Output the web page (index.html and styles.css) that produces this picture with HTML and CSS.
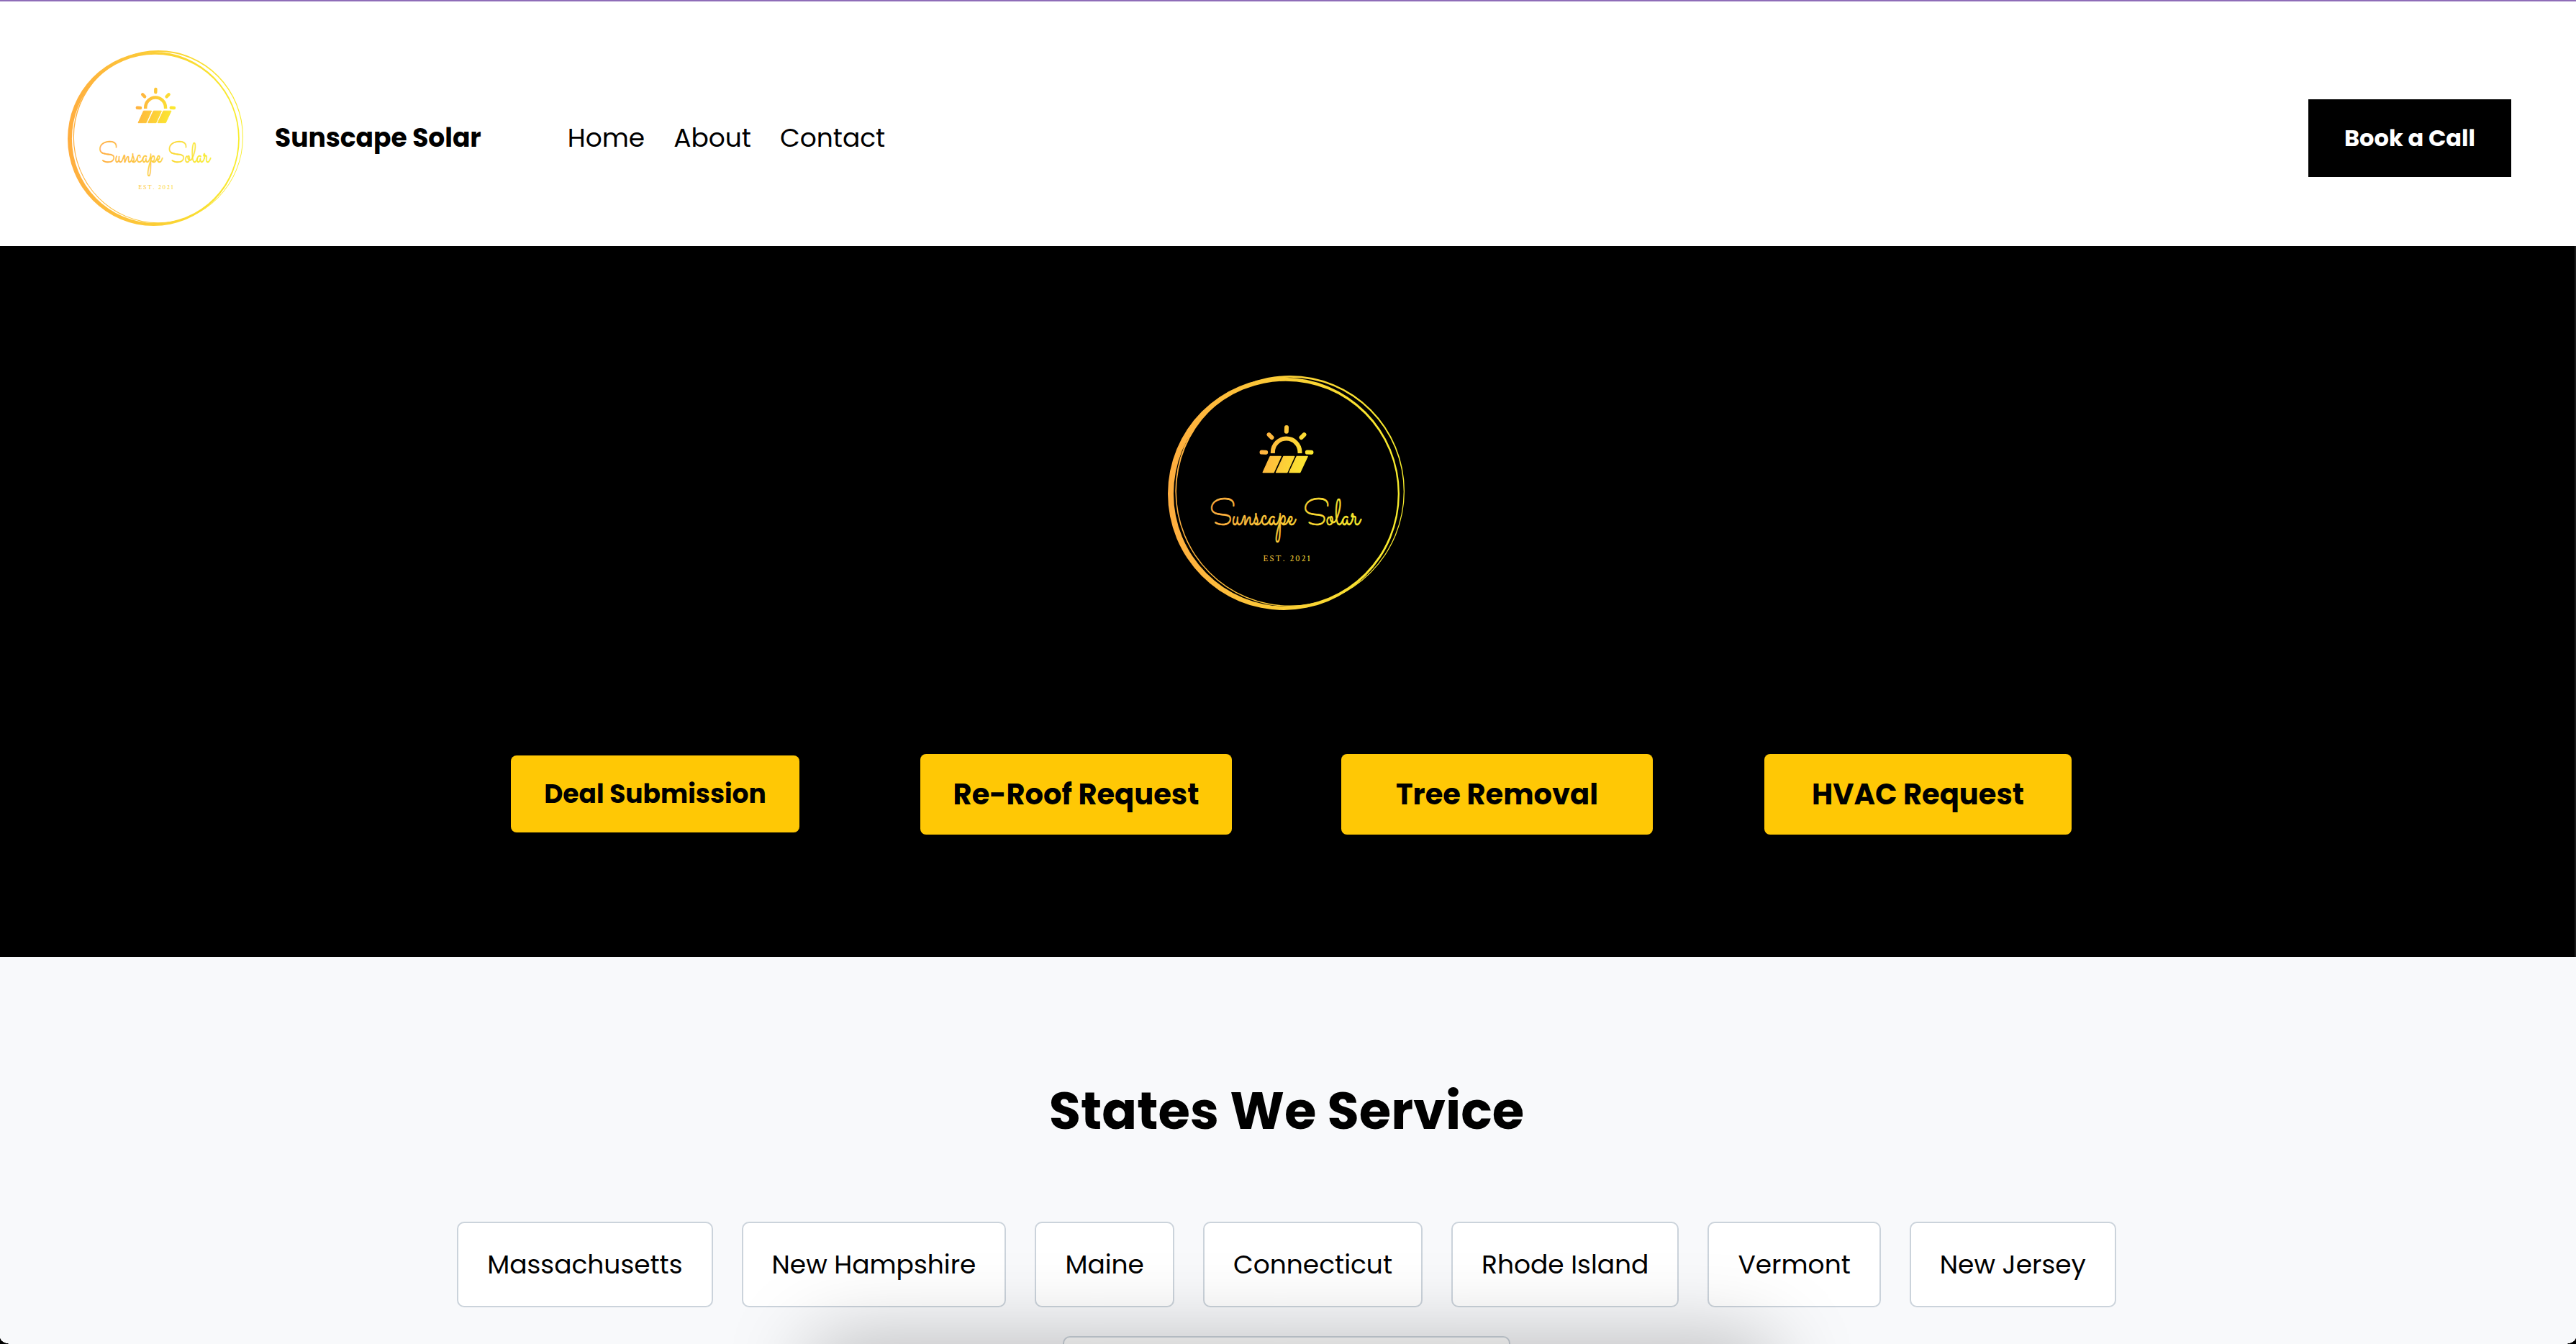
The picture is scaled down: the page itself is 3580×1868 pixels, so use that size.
FILE: index.html
```html
<!DOCTYPE html>
<html lang="en">
<head>
<meta charset="utf-8">
<title>Sunscape Solar</title>
<link rel="stylesheet" href="styles.css">
</head>
<body>
<svg class="defs" aria-hidden="true">
  <defs>
    <linearGradient id="ring" gradientUnits="userSpaceOnUse" x1="70" y1="0" x2="1058" y2="0">
      <stop offset="0" stop-color="#ffad3f"/><stop offset="1" stop-color="#f8ee2c"/>
    </linearGradient>
    <linearGradient id="sun" gradientUnits="userSpaceOnUse" x1="453" y1="340" x2="678" y2="400">
      <stop offset="0" stop-color="#ffae41"/><stop offset="1" stop-color="#fbec2f"/>
    </linearGradient>
    <linearGradient id="word" gradientUnits="userSpaceOnUse" x1="246" y1="0" x2="876" y2="0">
      <stop offset="0" stop-color="#ffae41"/><stop offset="1" stop-color="#f8ee2c"/>
    </linearGradient>
    <symbol id="logo" viewBox="70 66 988 977" preserveAspectRatio="none">
      <g fill="url(#ring)" fill-rule="evenodd">
        <path d="M70 558.500A483.500 484.500 0 0 1 1037 558.500A483.500 484.500 0 0 1 70 558.500ZM94 558A468 469 0 0 0 1030 558A468 469 0 0 0 94 558Z"/>
        <path d="M101 547A478.500 481 0 0 1 1058 547A478.500 481 0 0 1 101 547ZM106 549A474 475 0 0 0 1054 549A474 475 0 0 0 106 549Z"/>
      </g>
      <g stroke="url(#sun)" fill="none" stroke-width="18">
        <path d="M508 390V385A56.500 56.500 0 0 1 621 385V390"/>
        <path stroke-linecap="round" d="M565.500 282L565 299M492 312L504 324M639 312L627 324M462 385.500L479 386M652 385.500L669 386"/>
      </g>
      <path fill="url(#sun)" stroke="url(#sun)" stroke-width="4" stroke-linejoin="round" d="M497 403H542L512 469H467ZM553 403H598L568 469H522ZM608 403H653L622 469H577Z"/>
      <text class="script" x="245" y="687" textLength="355" lengthAdjust="spacingAndGlyphs">Sunscape</text>
      <text class="script" x="636" y="687" textLength="236" lengthAdjust="spacingAndGlyphs">Solar</text>
      <text class="est" x="468" y="839" textLength="197">EST. 2021</text>
    </symbol>
  </defs>
</svg>

<div class="page">
  <header class="header">
    <svg class="header-logo" role="img" aria-label="Sunscape Solar"><use href="#logo"/></svg>
    <span class="brand">Sunscape Solar</span>
    <nav class="nav">
      <a>Home</a>
      <a>About</a>
      <a>Contact</a>
    </nav>
    <a class="book">Book a Call</a>
  </header>

  <section class="hero">
    <svg class="hero-logo" role="img" aria-label="Sunscape Solar"><use href="#logo"/></svg>
    <div class="actions">
      <a class="action deal">Deal Submission</a>
      <a class="action">Re-Roof Request</a>
      <a class="action">Tree Removal</a>
      <a class="action hvac">HVAC Request</a>
    </div>
  </section>

  <section class="states">
    <h2>States We Service</h2>
    <ul class="pills">
      <li>Massachusetts</li>
      <li>New Hampshire</li>
      <li>Maine</li>
      <li>Connecticut</li>
      <li>Rhode Island</li>
      <li>Vermont</li>
      <li>New Jersey</li>
      <li class="more"></li>
    </ul>
  </section>

  <div class="dock-shadow"></div>
  <i class="corner left"></i>
  <i class="corner right"></i>
</div>
</body>
</html>
```
FILE: styles.css
```css
* { box-sizing: border-box; }
body {
  margin: 0;
  color: #000;
  font: 400 36px/54px "Poppins", "Inter", sans-serif;
}
.page {
  position: relative;
  height: 1868px;
  overflow: hidden;
  background: #f8f9fb;
}
.defs { position: absolute; width: 0; height: 0; }
.script {
  font: 400 154px "Sacramento", "Liberation Serif", cursive;
  fill: url(#word);
  stroke: url(#word);
  stroke-width: 2px;
}
.est {
  font: 400 37px "Crimson Text", "Liberation Serif", serif;
  font-variant-numeric: lining-nums;
  fill: url(#word);
}

.header {
  display: flex;
  align-items: center;
  height: 342px;
  padding: 42px 90px 0 94px;
  background: #fff;
  border-top: 2px solid #8f6db8;
}
.header-logo { width: 244px; height: 244px; margin-top: -2px; }
.brand { margin-left: 44px; font-weight: 700; }
.nav { display: flex; gap: 40px; margin-left: 120px; }
.brand, .nav, .book { margin-bottom: 2px; }
.book {
  display: flex;
  align-items: center;
  justify-content: center;
  width: 282px;
  height: 108px;
  margin-left: auto;
  background: #000;
  color: #fff;
  font-size: 32px;
  font-weight: 700;
}

.hero {
  height: 988px;
  padding: 180px 2px 0 0;
  border-right: 2px solid #1c1c1c;
  background: #000;
}
.hero-logo { display: block; width: 329px; height: 326px; margin: 0 0 0 1623px; }
.actions {
  display: grid;
  grid-template-columns: repeat(4, 585px);
  justify-content: center;
  place-items: center;
  margin-top: 200px;
}
.action {
  display: flex;
  align-items: center;
  justify-content: center;
  width: 433px;
  height: 112px;
  border-radius: 8px;
  background: #ffc805;
  font-size: 40px;
  font-weight: 700;
}
.deal { width: 401px; height: 107px; margin-bottom: 1px; font-size: 36px; }
.hvac { width: 427px; }

.states { padding: 160px 4px 0 0; }
h2 {
  margin: 0;
  text-align: center;
  font-size: 72px;
  line-height: 108px;
  font-weight: 700;
}
.pills {
  display: flex;
  flex-wrap: wrap;
  justify-content: center;
  gap: 40px;
  width: 2400px;
  margin: 100px auto 0;
  padding: 0;
  list-style: none;
}
.pills li {
  height: 119px;
  padding: 0 40px;
  border: 2px solid #cbd3db;
  border-radius: 10px;
  background: #fff;
  line-height: 115px;
  white-space: nowrap;
}
.pills .more { width: 622px; }

/* soft shadow rising from below the fold */
.dock-shadow {
  position: absolute;
  left: 1128px;
  top: 1868px;
  width: 1334px;
  height: 200px;
  border-radius: 20px;
  box-shadow: 0 -6px 115px rgba(0, 0, 0, .26);
}

/* rounded window corners */
.corner { position: absolute; bottom: 0; width: 16px; height: 9px; }
.corner.left { left: 0; background: radial-gradient(16px 9px at 16px 0, transparent 97%, #000 100%); }
.corner.right { right: 0; background: radial-gradient(16px 9px at 0 0, transparent 97%, #000 100%); }
```
